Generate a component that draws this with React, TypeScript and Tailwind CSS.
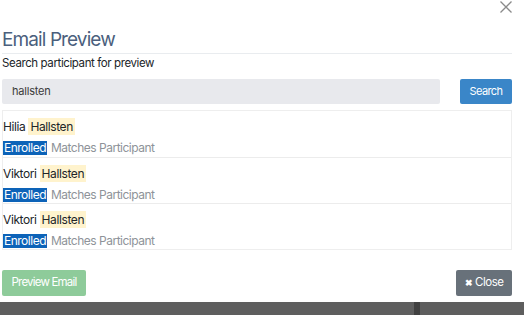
const rows = [
  { first: 'Hilia', last: 'Hallsten' },
  { first: 'Viktori', last: 'Hallsten' },
  { first: 'Viktori', last: 'Hallsten' },
];

export default function App() {
  return (
    <div className="w-[524px] h-[315px] bg-[#5e5e5e] flex flex-col overflow-hidden font-['Inter',sans-serif]">
      {/* modal */}
      <div className="bg-white h-[302px] shrink-0 flex flex-col pl-[2px] pr-[12px]">
        <div className="flex justify-end pt-[1px]">
          <svg width="12" height="12" viewBox="0 0 12 12" className="text-[#8a8a8a]">
            <path d="M0.5 0.5 L11.5 11.5 M11.5 0.5 L0.5 11.5" stroke="currentColor" strokeWidth="1.3" fill="none" />
          </svg>
        </div>

        <h2 className="mt-[15px] text-[19px] leading-[24px] tracking-[-0.9px] text-[#4b5f7d] font-normal">Email Preview</h2>
        <div className="mt-[1px] border-t border-[#e9ecef]" />
        <p className="mt-[1px] text-[11.5px] leading-[16px] tracking-[-0.4px] text-[#212529]">Search participant for preview</p>

        <div className="mt-[8px] flex items-center justify-between">
          <div className="w-[438px] h-[25px] bg-[#e8e9ed] rounded-[2px] flex items-center pl-[10px] text-[11px] tracking-[-0.2px] text-[#3a3a3a]">
            hallsten
          </div>
          <button className="w-[52px] h-[25px] bg-[#3a86c8] rounded-[2px] text-white text-[11px] tracking-[-0.6px]">Search</button>
        </div>

        <div className="mt-[6px] border border-[#eeeeee] flex flex-col">
          {rows.map((r, i) => (
            <div key={i} className={`h-[46px] flex flex-col pt-[7px] gap-[6px] ${i > 0 ? 'border-t border-[#ececec]' : ''}`}>
              <div className="flex items-center gap-[3px] text-[12px] leading-[17px] tracking-[-0.4px] text-[#212529]">
                <span>{r.first}</span>
                <span className="bg-[#fff3cd] px-[2px]">{r.last}</span>
              </div>
              <div className="flex items-center gap-[4px] text-[12px] leading-[14px] tracking-[-0.5px]">
                <span className="bg-[#0d63b8] text-white px-[1px]">Enrolled</span>
                <span className="text-[#8e9399]">Matches Participant</span>
              </div>
            </div>
          ))}
        </div>

        <div className="mt-[20px] flex justify-between">
          <button className="w-[84px] h-[26px] bg-[#8ecb9a] rounded-[2px] text-white text-[11.5px] tracking-[-0.8px]">Preview Email</button>
          <button className="w-[56px] h-[26px] bg-[#68717a] rounded-[2px] text-white text-[11.5px] tracking-[-0.5px] flex items-center justify-center gap-[3px]">
            <span className="text-[9px] font-bold">✖</span>Close
          </button>
        </div>
      </div>
      <div className="flex-1 flex">
        <div className="w-[414px]" />
        <div className="w-[6px] bg-[#404040]" />
      </div>
    </div>
  );
}
